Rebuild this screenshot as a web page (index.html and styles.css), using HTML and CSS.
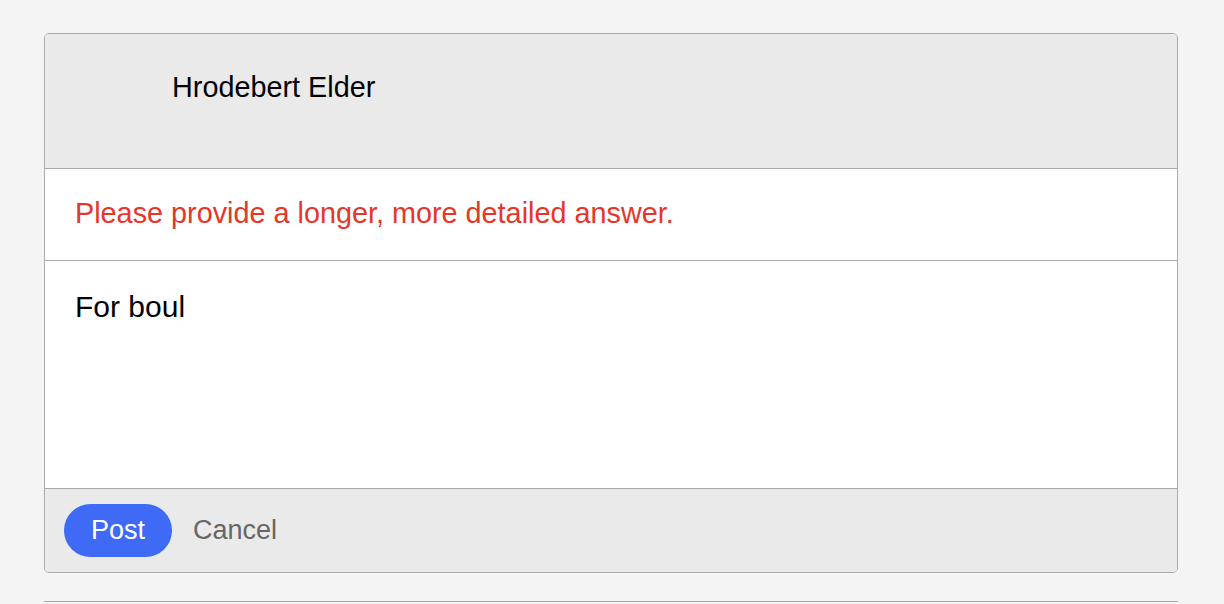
FILE: index.html
```html
<!DOCTYPE html>
<html>
<head>
<meta charset="utf-8">
<link rel="stylesheet" href="styles.css">
</head>
<body>
<div class="page">
  <div class="card">
    <div class="card-header">
      <span class="author">Hrodebert Elder</span>
    </div>
    <div class="card-error">Please provide a longer, more detailed answer.</div>
    <div class="card-body">For boul</div>
    <div class="card-footer">
      <button class="btn-post">Post</button>
      <button class="btn-cancel">Cancel</button>
    </div>
  </div>
  <div class="divider"></div>
</div>
</body>
</html>
```

FILE: styles.css
```css
html, body {
  margin: 0;
  padding: 0;
  background: #f4f4f4;
}
body {
  font-family: "Liberation Sans", Arial, sans-serif;
  font-size: 28.8px;
  line-height: 33px;
  color: #000;
}
.page {
  padding: 33px 46px 0 44px;
}
.card {
  border: 1px solid #aaa;
  border-radius: 5px;
  overflow: hidden;
  background: #fff;
}
.card-header {
  box-sizing: border-box;
  height: 135px;
  padding: 37px 0 0 127px;
  background: #eaeaea;
  border-bottom: 1px solid #aaa;
}
.card-error {
  box-sizing: border-box;
  height: 92px;
  padding: 28px 30px 0 30px;
  color: #e8352a;
  border-bottom: 1px solid #aaa;
}
.card-body {
  box-sizing: border-box;
  height: 228px;
  padding: 29px 30px 0 30px;
  font-size: 30px;
  border-bottom: 1px solid #aaa;
}
.card-footer {
  box-sizing: border-box;
  height: 83px;
  padding: 15px 19px 0 19px;
  background: #eaeaea;
  display: flex;
  align-items: flex-start;
  gap: 21px;
}
.btn-post {
  font: inherit;
  font-size: 27px;
  line-height: 33px;
  height: 53px;
  width: 108px;
  padding: 0;
  border: none;
  border-radius: 27px;
  background: #3e6af6;
  color: #fff;
}
.btn-cancel {
  font: inherit;
  font-size: 27px;
  line-height: 33px;
  height: 53px;
  padding: 0;
  border: none;
  background: none;
  color: #666;
}
.divider {
  margin-top: 28px;
  border-top: 1px solid #aaa;
}
```
